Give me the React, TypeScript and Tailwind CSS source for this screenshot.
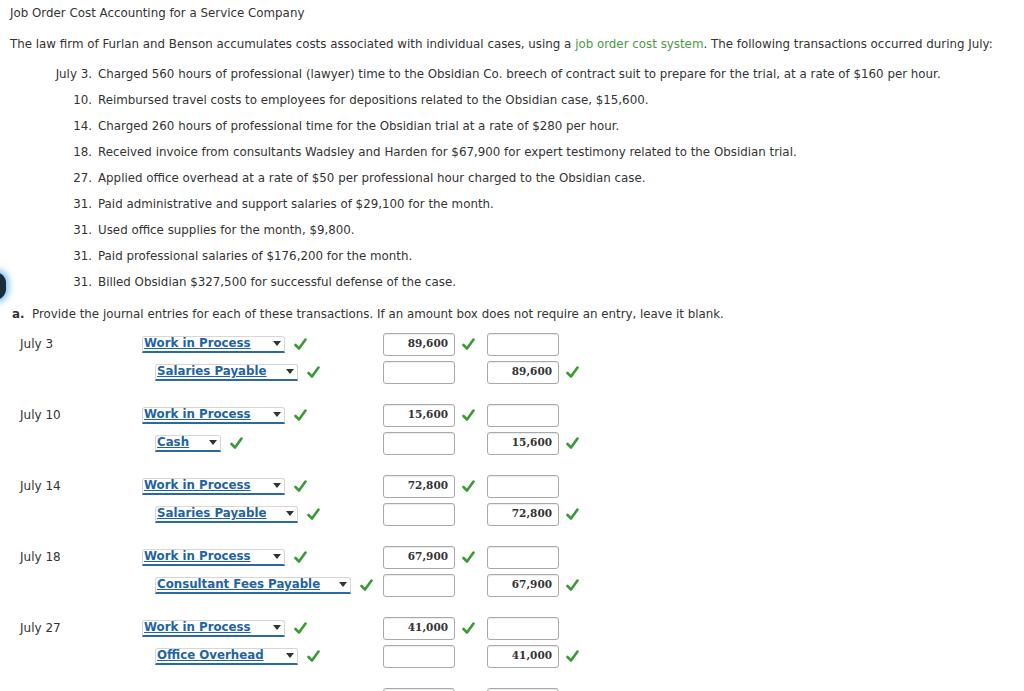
import type { ReactNode } from 'react';

const FONT = "font-['DejaVu_Sans',Verdana,sans-serif]";

const TRANSACTIONS: { n: string; text: string }[] = [
  { n: 'July 3.', text: 'Charged 560 hours of professional (lawyer) time to the Obsidian Co. breech of contract suit to prepare for the trial, at a rate of $160 per hour.' },
  { n: '10.', text: 'Reimbursed travel costs to employees for depositions related to the Obsidian case, $15,600.' },
  { n: '14.', text: 'Charged 260 hours of professional time for the Obsidian trial at a rate of $280 per hour.' },
  { n: '18.', text: 'Received invoice from consultants Wadsley and Harden for $67,900 for expert testimony related to the Obsidian trial.' },
  { n: '27.', text: 'Applied office overhead at a rate of $50 per professional hour charged to the Obsidian case.' },
  { n: '31.', text: 'Paid administrative and support salaries of $29,100 for the month.' },
  { n: '31.', text: 'Used office supplies for the month, $9,800.' },
  { n: '31.', text: 'Paid professional salaries of $176,200 for the month.' },
  { n: '31.', text: 'Billed Obsidian $327,500 for successful defense of the case.' },
];

type Entry = { date: string; debit: string; credit: string; creditW: string; amount: string };

const ENTRIES: Entry[] = [
  { date: 'July 3', debit: 'Work in Process', credit: 'Salaries Payable', creditW: 'w-[143px]', amount: '89,600' },
  { date: 'July 10', debit: 'Work in Process', credit: 'Cash', creditW: 'w-[66px]', amount: '15,600' },
  { date: 'July 14', debit: 'Work in Process', credit: 'Salaries Payable', creditW: 'w-[143px]', amount: '72,800' },
  { date: 'July 18', debit: 'Work in Process', credit: 'Consultant Fees Payable', creditW: 'w-[196px]', amount: '67,900' },
  { date: 'July 27', debit: 'Work in Process', credit: 'Office Overhead', creditW: 'w-[143px]', amount: '41,000' },
  { date: 'July 31', debit: 'Salaries Payable', credit: 'Cash', creditW: 'w-[66px]', amount: '29,100' },
];

function Check({ show = true }: { show?: boolean }) {
  return (
    <span className="inline-flex h-[16px] w-[14px] items-center justify-center">
      {show && (
        <svg width="13" height="13" viewBox="0 0 13 13">
          <path d="M1.5 7 L5 10.5 L11.5 1.5" fill="none" stroke="#3a9a35" strokeWidth="2.6" strokeLinecap="round" strokeLinejoin="round" />
        </svg>
      )}
    </span>
  );
}

function Account({ label, w }: { label: string; w: string }) {
  return (
    <span className={`relative flex h-[17px] ${w} items-center rounded-t-[3px] border border-b-2 border-[#d6d6d6] border-b-[#2a6aa0] bg-white pl-[1px] text-[11.8px] font-bold leading-none text-[#1f64a0]`}>
      <span className="flex-1 whitespace-nowrap underline decoration-[#1f64a0]">{label}</span>
      <svg width="8" height="5" viewBox="0 0 8 5" className="mr-[3px] shrink-0">
        <path d="M0 0 H8 L4 5 Z" fill="#333" />
      </svg>
    </span>
  );
}

function Amount({ value }: { value?: string }) {
  return (
    <div className="flex h-[23px] w-[72px] items-center justify-end rounded-[3px] border border-[#a9a9a9] bg-white pr-[6px] font-['DejaVu_Serif',Georgia,serif] text-[10.5px] font-bold text-[#333] shadow-[inset_0_1px_1px_rgba(0,0,0,0.08)]">
      {value}
    </div>
  );
}

function Row({ date, indent, account, w, debit, credit }: { date?: string; indent?: boolean; account: ReactNode; w: string; debit?: string; credit?: string }) {
  return (
    <div className="flex h-[28px] items-center">
      <div className="w-[142px] pl-[20px] text-[12px] text-[#333]">{date}</div>
      <div className={`flex w-[241px] items-center gap-[8px] ${indent ? 'pl-[13px]' : ''}`}>
        <Account label={account as string} w={w} />
        <Check />
      </div>
      <div className="flex items-center gap-[6px]">
        <Amount value={debit} />
        <Check show={!!debit} />
      </div>
      <div className="ml-[12px] flex items-center gap-[6px]">
        <Amount value={credit} />
        <Check show={!!credit} />
      </div>
    </div>
  );
}

export default function App() {
  return (
    <div className={`relative h-[691px] w-[1024px] overflow-hidden bg-white ${FONT} text-[11.85px] text-[#333]`}>
      {/* left edge focus marker */}
      <div className="absolute left-[-16px] top-[272px] h-[28px] w-[22px] rounded-full bg-[#1b2b3a] shadow-[0_0_6px_3px_rgba(80,170,240,0.7)]" />

      <div className="pl-[10px] pt-[5px]">
        <p className="leading-[16px]">Job Order Cost Accounting for a Service Company</p>
        <p className="mt-[15px] leading-[16px]">
          The law firm of Furlan and Benson accumulates costs associated with individual cases, using a{' '}
          <span className="text-[#4c9a44]">job order cost system</span>. The following transactions occurred during July:
        </p>
      </div>

      <div className="mt-[10px] flex flex-col">
        {TRANSACTIONS.map((t, i) => (
          <div key={i} className="flex h-[26px] items-center">
            <span className="w-[98px] pr-[6px] text-right">{t.n}</span>
            <span>{t.text}</span>
          </div>
        ))}
      </div>

      <p className="mt-[10px] pl-[12px] leading-[16px]">
        <span className="font-bold">a.</span>&nbsp; Provide the journal entries for each of these transactions. If an amount box does not require an entry, leave it blank.
      </p>

      <div className="mt-[8px] flex flex-col">
        {ENTRIES.map((e) => (
          <div key={e.date} className="mb-[15px]">
            <Row date={e.date} account={e.debit} w="w-[143px]" debit={e.amount} />
            <Row indent account={e.credit} w={e.creditW} credit={e.amount} />
          </div>
        ))}
      </div>
    </div>
  );
}
